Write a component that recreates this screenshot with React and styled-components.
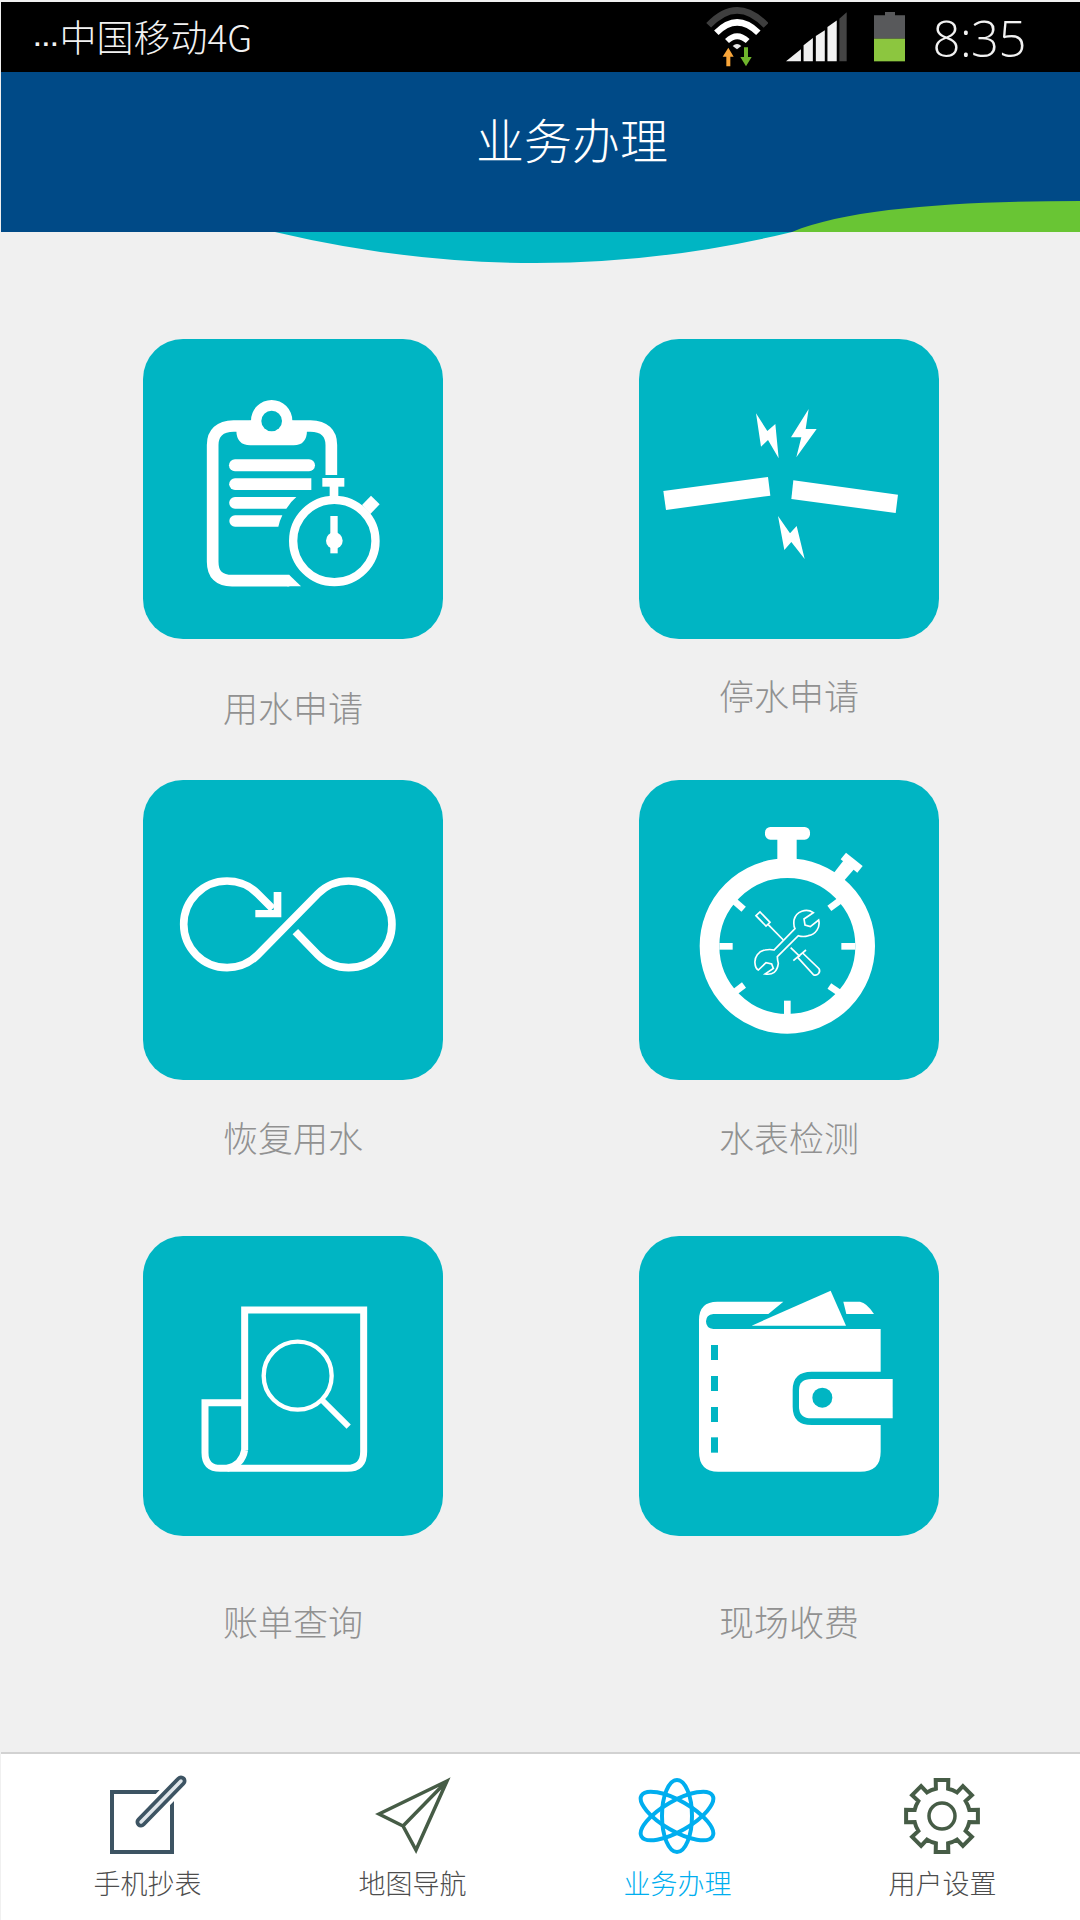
import React from 'react';
import styled, { createGlobalStyle } from 'styled-components';

const TEAL = '#00b5c3';
const CJK = '"Noto Sans CJK SC", "Noto Sans", sans-serif';

const GlobalStyle = createGlobalStyle`
  html, body {
    margin: 0;
    background: #fff;
  }
`;

const Page = styled.div`
  width: 1080px;
  height: 1920px;
  box-sizing: border-box;
  padding: 2px 0 0 1px;
  display: flex;
  flex-direction: column;
  background: #f0f0f0;
  font-family: ${CJK};
  overflow: hidden;
`;

const StatusBar = styled.div`
  height: 70px;
  flex: none;
  display: flex;
  align-items: center;
  padding: 0 54px 0 33px;
  background: #000;
  color: #f2f2f2;
`;

const Carrier = styled.span`
  font-size: 37px;
  font-weight: 300;
  line-height: 70px;
  margin-top: 5px;
  margin-right: auto;
`;

const Dots = styled.span`
  font-family: 'Liberation Sans', sans-serif;
  font-size: 24px;
  font-weight: 700;
  letter-spacing: 0.5px;
`;

const StatusIcon = styled.svg`
  flex: none;
  display: block;
  margin-right: ${(p) => p.$gap}px;
`;

const Clock = styled.span`
  font-family: 'Open Sans', sans-serif;
  font-size: 49px;
  font-weight: 300;
  line-height: 70px;
  margin-top: 2px;
  letter-spacing: -0.5px;
`;

const Header = styled.header`
  position: relative;
  z-index: 1;
  height: 160px;
  flex: none;
  display: flex;
  justify-content: center;
  padding: 0 0 0 63px;
  background: #004a87;
`;

const Title = styled.h1`
  margin: 34px 0 0;
  font-size: 48px;
  font-weight: 300;
  line-height: 64px;
  color: #fff;
`;

const Wave = styled.svg`
  position: absolute;
  top: 0;
  left: -1px;
  display: block;
`;

const Main = styled.main`
  flex: 1;
  display: grid;
  grid-template-columns: 300px 300px;
  grid-template-rows: 441px 456px auto;
  column-gap: 196px;
  padding: 107px 0 0 142px;
`;

const Service = styled.div`
  display: flex;
  flex-direction: column;
  align-items: center;
`;

const Tile = styled.div`
  width: 300px;
  height: 300px;
  flex: none;
  border-radius: 40px;
  background: ${TEAL};
  svg {
    display: block;
  }
`;

const ServiceLabel = styled.span`
  margin-top: ${(p) => p.$top}px;
  font-size: 35px;
  font-weight: 300;
  line-height: 40px;
  color: #919191;
`;

const TabBar = styled.nav`
  height: 168px;
  flex: none;
  box-sizing: border-box;
  display: grid;
  grid-template-columns: repeat(4, 265px);
  padding: 20px 0 0 14px;
  border-top: 2px solid #d2d2d2;
  background: #fff;
`;

const Tab = styled.div`
  display: flex;
  flex-direction: column;
  align-items: center;
  color: ${(p) => (p.$active ? '#00aeef' : '#4d4d4d')};
`;

const TabIcon = styled.svg`
  display: block;
  width: 84px;
  height: 84px;
`;

const TabLabel = styled.span`
  margin-top: 7px;
  font-size: 27px;
  font-weight: 300;
  line-height: 36px;
`;

const WifiIcon = () => (
  <StatusIcon $gap={18} width="62" height="60" viewBox="75 30 186 180">
    <path d="M83 85 Q168 -5 255 85" fill="none" stroke="#3e3e3e" strokeWidth="20" />
    <path d="M106 107 Q168 45 232 107" fill="none" stroke="#fff" strokeWidth="19" />
    <path d="M138 132 Q168 103 200 132" fill="none" stroke="#fff" strokeWidth="17" />
    <path d="M155 147 Q168 135 181 147 L168 157Z" fill="#e8e8e8" />
    <path d="M142 152 L158 179 H148 V208 H136 V179 H125Z" fill="#f9a63a" />
    <path d="M195 208 L178 180 H189 V151 H201 V180 H212Z" fill="#6fb52c" />
  </StatusIcon>
);

const SignalIcon = () => (
  <StatusIcon $gap={27} width="61" height="50" viewBox="315 40 184 150">
    <path d="M315 188 L360 152 V188Z" fill="#f1f1f1" />
    <path d="M368 188 V140 L396 118 V188Z" fill="#f1f1f1" />
    <path d="M405 188 V112 L432 95 V188Z" fill="#f1f1f1" />
    <path d="M440 188 V85 L468 65 V188Z" fill="#f1f1f1" />
    <path d="M476 188 V60 L498 40 V188Z" fill="#444" />
  </StatusIcon>
);

const BatteryIcon = () => (
  <StatusIcon $gap={27} width="31" height="50" viewBox="579 40 93 150">
    <path d="M612 40 H642 V50 H672 V120 H579 V50 H612Z" fill="#58595b" />
    <rect x="579" y="120" width="93" height="68" fill="#8cc63f" />
  </StatusIcon>
);

const IconSvg = ({ x, y, children }) => (
  <svg width="300" height="300" viewBox={`${x} ${y} 900 900`}>
    {children}
  </svg>
);

const ApplyIcon = () => (
  <IconSvg x={38} y={27}>
    <path
      d="M603 435 V345 Q603 290 540 288 H310 Q247 290 247 345 V695 Q247 752 305 752 H477"
      fill="none"
      stroke="#fff"
      strokeWidth="35"
    />
    <path d="M477 735 L512 769 H470 V735Z" fill="#fff" />
    <path
      d="M318 300 Q326 272 362 272 A62 62 0 0 1 486 272 Q522 272 530 300 Q530 346 490 346 H360 Q318 346 318 300Z"
      fill="#fff"
    />
    <circle cx="424" cy="273" r="31" fill={TEAL} />
    <path d="M314 388 H536 A18 18 0 0 1 536 424 H314 A18 18 0 0 1 314 388Z" fill="#fff" />
    <path d="M314 445 H543 V480 H314 A17.500 17.500 0 0 1 314 445Z" fill="#fff" />
    <path d="M314 501 H498 Q480 516 468 536 H314 A17.500 17.500 0 0 1 314 501Z" fill="#fff" />
    <path d="M314 556 H456 Q448 572 444 590 H314 A17 17 0 0 1 314 556Z" fill="#fff" />
    <circle cx="612" cy="633" r="123.500" fill="none" stroke="#fff" strokeWidth="25" />
    <rect x="576" y="444" width="66" height="26" fill="#fff" />
    <rect x="598" y="468" width="26" height="34" fill="#fff" />
    <path d="M722 497 L748 523 L720 552 L695 525Z" fill="#fff" />
    <rect x="600" y="558" width="22" height="112" fill="#fff" />
    <circle cx="612" cy="632" r="25" fill="#fff" />
  </IconSvg>
);

const StopIcon = () => (
  <IconSvg x={27} y={27}>
    <g fill="#fff">
      <path d="M100 483 L414 441 L421 497 L108 540Z" />
      <path d="M490 451 L804 494 L797 549 L484 507Z" />
      <path d="M378 250 L412 303 L436 282 L446 385 L414 330 L393 350Z" />
      <path d="M536 237 L527 297 H560 L499 382 L514 322 H483Z" />
      <path d="M444 558 L480 610 L500 588 L524 687 L484 636 L463 660Z" />
    </g>
  </IconSvg>
);

const RestoreIcon = () => (
  <IconSvg x={38} y={30}>
    <path
      d="M427 416 L382 371 A130 130 0 1 0 382 555 L563 371 A130 130 0 1 1 563 555 L495 485"
      fill="none"
      stroke="#fff"
      strokeWidth="23"
    />
    <path d="M430 366 H453 V442 H375 V420 H430Z" fill="#fff" />
  </IconSvg>
);

const MeterIcon = () => (
  <IconSvg x={27} y={30}>
    <circle cx="472" cy="528" r="233.500" fill="none" stroke="#fff" strokeWidth="59" />
    <rect x="405" y="171" width="135" height="38" rx="16" fill="#fff" />
    <rect x="442" y="205" width="58" height="70" fill="#fff" />
    <path d="M648 248 L698 288 L682 308 L632 268Z" fill="#fff" />
    <path d="M640 272 L672 298 L642 332 L612 308Z" fill="#fff" />
    <g stroke="#fff" strokeWidth="20">
      <path d="M268 529 H308" />
      <path d="M634 529 H676" />
      <path d="M472 692 V735" />
      <path d="M315 395 L341 418" />
      <path d="M628 393 L598 415" />
      <path d="M342 645 L312 668" />
      <path d="M598 648 L628 668" />
    </g>
    <g fill="none" stroke="#fff" strokeWidth="5">
      <path d="M550 428 A38 38 0 0 0 492 450 Q490 468 495 476 L432 540 Q420 537 405 540 A36 36 0 0 0 375 580 Q376 595 385 600 L408 578 L425 582 L430 595 L405 612 Q440 618 445 580 Q442 568 442 560 L505 497 Q520 502 535 497 A38 38 0 0 0 566 450 L541 470 L525 465 L522 447Z" />
      <path d="M378 437 L390 426 L420 457 L408 468Z" />
      <path d="M414 463 L460 510" />
      <path d="M482 533 L510 560" />
      <path d="M490 572 L528 540" />
      <path d="M503 562 L550 614 A13 13 0 0 0 567 596 L518 549" />
    </g>
  </IconSvg>
);

const BillIcon = () => (
  <IconSvg x={38} y={18}>
    <g fill="none" stroke="#fff">
      <path
        d="M343 660 V240 H700 V665 Q700 715 650 715 H270 Q224 715 224 668 V518 H343"
        strokeWidth="21"
      />
      <path d="M343 660 Q335 705 290 715" strokeWidth="21" />
      <circle cx="502" cy="437" r="102" strokeWidth="13" />
      <path d="M575 510 L655 590" strokeWidth="18" />
    </g>
  </IconSvg>
);

const WalletIcon = () => (
  <IconSvg x={27} y={18}>
    <g fill="#fff">
      <path d="M207 270 Q207 215 262 215 H460 L415 252 H250 Q228 255 228 274 Q228 295 250 297 H752 V425 H545 Q488 425 488 480 V530 Q488 585 545 585 H752 V665 Q752 725 690 725 H265 Q207 725 207 665Z" />
      <path d="M507 480 Q507 447 545 447 H788 V565 H545 Q507 565 507 530Z" />
      <path d="M602 182 L648 287 H365Z" />
      <path d="M640 215 H690 Q710 218 732 252 H649Z" />
    </g>
    <circle cx="577" cy="503" r="30" fill={TEAL} />
    <g fill={TEAL}>
      <rect x="243" y="345" width="21" height="45" />
      <rect x="243" y="438" width="21" height="45" />
      <rect x="243" y="531" width="21" height="45" />
      <rect x="243" y="622" width="21" height="46" />
    </g>
  </IconSvg>
);

const EditIcon = () => (
  <TabIcon viewBox="106 1774 84 84">
    <rect x="112" y="1792" width="60" height="60" fill="none" stroke="#3d5463" strokeWidth="4" />
    <path d="M141 1822 L181 1781" stroke="#fff" strokeWidth="18" strokeLinecap="round" />
    <path d="M141 1822 L181 1781" stroke="#3d5463" strokeWidth="11" strokeLinecap="round" />
    <path d="M141 1822 L181 1781" stroke="#dfe5ea" strokeWidth="3.500" strokeLinecap="round" />
  </TabIcon>
);

const PlaneIcon = () => (
  <TabIcon viewBox="371 1774 84 84">
    <path
      d="M447 1781 L379 1814 L403 1826 L416 1850Z M403 1826 L447 1781"
      fill="none"
      stroke="#465c46"
      strokeWidth="3.500"
    />
  </TabIcon>
);

const AtomIcon = () => (
  <TabIcon viewBox="636 1774 84 84">
    <g fill="none" stroke="#00aeef" strokeWidth="4">
      <ellipse cx="677" cy="1816" rx="15" ry="36" />
      <ellipse cx="677" cy="1816" rx="15" ry="41" transform="rotate(60 677 1816)" />
      <ellipse cx="677" cy="1816" rx="15" ry="41" transform="rotate(-60 677 1816)" />
    </g>
  </TabIcon>
);

// eight teeth, one every 45 degrees, starting at the top
const gearPath = (cx, cy) => {
  const point = (r, deg) => {
    const a = ((deg - 90) * Math.PI) / 180;
    return `${(cx + r * Math.cos(a)).toFixed(1)} ${(cy + r * Math.sin(a)).toFixed(1)}`;
  };
  let d = '';
  for (let i = 0; i < 8; i++) {
    const t = i * 45;
    d += `${i ? 'L' : 'M'}${point(28, t - 12.5)} L${point(36.5, t - 10)} L${point(36.5, t + 10)} L${point(28, t + 12.5)} `;
    d += `A28 28 0 0 1 ${point(28, t + 32.5)} `;
  }
  return d + 'Z';
};

const GearIcon = () => (
  <TabIcon viewBox="901 1773 84 84">
    <path d={gearPath(942, 1815)} fill="none" stroke="#465c46" strokeWidth="4" />
    <circle cx="942" cy="1815" r="13" fill="none" stroke="#465c46" strokeWidth="3.500" />
  </TabIcon>
);

const services = [
  { name: '用水申请', top: 48, Icon: ApplyIcon },
  { name: '停水申请', top: 36, Icon: StopIcon },
  { name: '恢复用水', top: 37, Icon: RestoreIcon },
  { name: '水表检测', top: 37, Icon: MeterIcon },
  { name: '账单查询', top: 65, Icon: BillIcon },
  { name: '现场收费', top: 65, Icon: WalletIcon },
];

const tabs = [
  { name: '手机抄表', Icon: EditIcon },
  { name: '地图导航', Icon: PlaneIcon },
  { name: '业务办理', Icon: AtomIcon, active: true },
  { name: '用户设置', Icon: GearIcon },
];

const App = () => {
  return (
    <>
      <GlobalStyle />
      <Page>
        <StatusBar>
          <Carrier>
            <Dots>···</Dots>中国移动4G
          </Carrier>
          <WifiIcon />
          <SignalIcon />
          <BatteryIcon />
          <Clock>8:35</Clock>
        </StatusBar>

        <Header>
          <Wave width="1080" height="200" viewBox="0 72 1080 200">
            <path d="M275 232 Q537 294 792 232Z" fill={TEAL} />
            <path d="M792 232 C850 207 970 201 1080 201 V232Z" fill="#69c534" />
          </Wave>
          <Title>业务办理</Title>
        </Header>

        <Main>
          {services.map(({ name, top, Icon }) => (
            <Service key={name}>
              <Tile>
                <Icon />
              </Tile>
              <ServiceLabel $top={top}>{name}</ServiceLabel>
            </Service>
          ))}
        </Main>

        <TabBar>
          {tabs.map(({ name, Icon, active }) => (
            <Tab key={name} $active={active}>
              <Icon />
              <TabLabel>{name}</TabLabel>
            </Tab>
          ))}
        </TabBar>
      </Page>
    </>
  );
};

export default App;
